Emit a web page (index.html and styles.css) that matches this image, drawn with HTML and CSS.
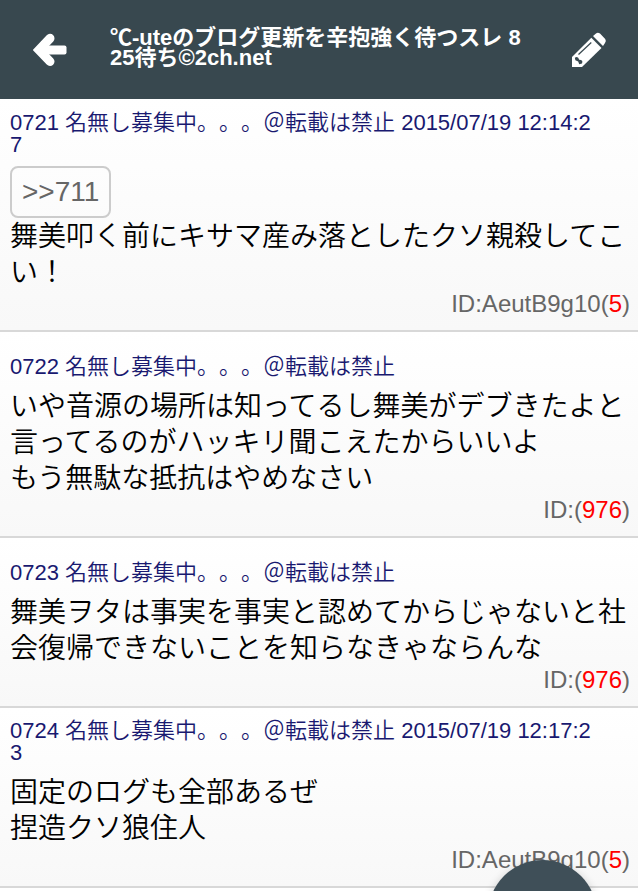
FILE: index.html
```html
<!DOCTYPE html>
<html lang="ja">
<head>
    <meta charset="UTF-8">
    <meta name="viewport" content="width=device-width, initial-scale=1.0">
    <title>℃-uteのブログ更新を辛抱強く待つスレ 825待ち©2ch.net</title>
    <link rel="stylesheet" href="styles.css">
</head>
<body>
    <header class="header">
        <svg class="icon back" viewBox="0 0 36 36">
            <path d="M17 6.3 L6 18 L17 29.5" fill="none" stroke="#fff" stroke-width="9" stroke-linecap="round" stroke-linejoin="miter"/>
            <rect x="6" y="13.5" width="27.5" height="9" rx="2" fill="#fff"/>
        </svg>
        <h1 class="title">℃-uteのブログ更新を辛抱強く待つスレ 8<br>25待ち©2ch.net</h1>
        <svg class="icon edit" viewBox="0 0 36 36">
            <path d="M1 25 L20.3 5.7 L30.5 16 L11 35 H1 Z" fill="#fff"/>
            <path d="M22 4 L25 1.4 Q27 0 29 1.6 L34.2 7 Q35.6 9 34 11 L32 14 Z" fill="#fff"/>
            <path d="M7.5 22.5 L20.3 10.5" stroke="#38484f" stroke-width="1.2"/>
            <path d="M3.8 25.8 Q7 23.3 8.2 27.8 Q12.5 27.8 11 31.5 L8.2 32.3 L7.2 29.6 L4.4 28.2 Z" fill="#38484f"/>
        </svg>
    </header>
    <main>
        <article class="post first">
            <div class="name">0721 名無し募集中。。。＠転載は禁止 2015/07/19 12:14:2<br>7</div>
            <a class="anchor">&gt;&gt;711</a>
            <div class="message">舞美叩く前にキサマ産み落としたクソ親殺してこ<br>い！</div>
            <div class="id">ID:AeutB9g10(<span class="count">5</span>)</div>
        </article>
        <article class="post undated">
            <div class="name">0722 名無し募集中。。。＠転載は禁止</div>
            <div class="message">いや音源の場所は知ってるし舞美がデブきたよと<br>言ってるのがハッキリ聞こえたからいいよ<br>もう無駄な抵抗はやめなさい</div>
            <div class="id">ID:(<span class="count">976</span>)</div>
        </article>
        <article class="post undated">
            <div class="name">0723 名無し募集中。。。＠転載は禁止</div>
            <div class="message">舞美ヲタは事実を事実と認めてからじゃないと社<br>会復帰できないことを知らなきゃならんな</div>
            <div class="id">ID:(<span class="count">976</span>)</div>
        </article>
        <article class="post">
            <div class="name">0724 名無し募集中。。。＠転載は禁止 2015/07/19 12:17:2<br>3</div>
            <div class="message">固定のログも全部あるぜ<br>捏造クソ狼住人</div>
            <div class="id">ID:AeutB9g10(<span class="count">5</span>)</div>
        </article>
    </main>
    <div class="fab"></div>
</body>
</html>
```
FILE: styles.css
```css
* {
    box-sizing: border-box;
}
body {
    margin: 0;
    height: 891px;
    overflow: hidden;
    background-color: #fff;
    font-family: "Liberation Sans", "Noto Sans CJK JP", sans-serif;
    font-weight: 350;
    white-space: nowrap;
    text-spacing-trim: space-all;
}
.header {
    display: flex;
    align-items: center;
    height: 99px;
    padding: 0 31px 0 33px;
    background-color: #38484f;
    color: #fff;
}
.icon {
    flex: none;
    width: 36px;
    height: 36px;
}
.edit {
    margin-left: auto;
}
.title {
    margin: 0 0 3px 41px;
    font-size: 22px;
    line-height: 20px;
    font-weight: bold;
}
.post {
    padding: 12px 8px 0 10px;
    border-bottom: 2px solid #d8d8d8;
    background: linear-gradient(#fff, #f8f8f8);
}
.first {
    padding-top: 13px;
}
.undated {
    padding-top: 24px;
}
.name {
    margin-bottom: 10px;
    font-size: 22px;
    line-height: 22px;
    color: #191970;
}
.anchor {
    display: block;
    width: fit-content;
    height: 52px;
    padding: 0 10px;
    border: 2px solid #ccc;
    border-radius: 8px;
    font-size: 28px;
    line-height: 48px;
    color: #666;
}
.message {
    padding-top: 1px;
    font-size: 28px;
    line-height: 36px;
    color: #000;
}
.id {
    height: 39px;
    font-size: 24px;
    line-height: 26px;
    text-align: right;
    color: #666;
}
.count {
    color: #f00;
}
.fab {
    position: absolute;
    left: 488px;
    top: 860px;
    width: 109px;
    height: 109px;
    border-radius: 50%;
    background-color: #3f4f58;
    box-shadow: 0 2px 10px rgba(0, 0, 0, 0.2);
}
```
